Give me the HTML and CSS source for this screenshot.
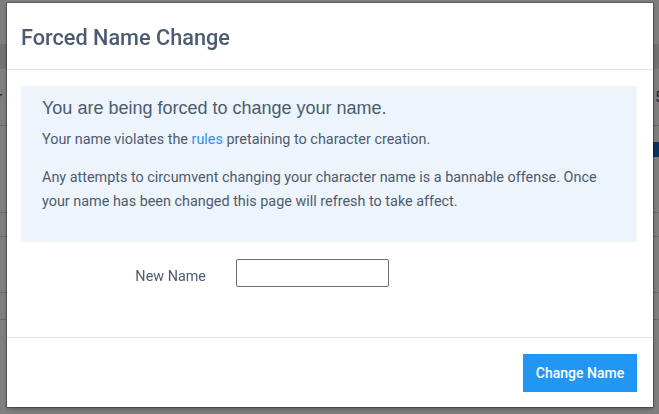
FILE: index.html
```html
<!DOCTYPE html>
<html>
<head>
<meta charset="utf-8">
<link rel="stylesheet" href="styles.css">
</head>
<body>
<div class="page">
  <div class="page-top"></div>
  <div class="page-band"></div>
  <div class="page-row page-row-text"><span class="pl">ar</span><span class="pr">5</span></div>
  <div class="page-row page-row-blue"><span class="bluebar"></span></div>
  <div class="page-row page-row-a"></div>
  <div class="page-row page-row-b"></div>
  <div class="page-row page-row-c"></div>
  <div class="page-row page-row-d"></div>
</div>
<div class="backdrop">
  <div class="modal">
    <div class="modal-header">
      <h3 class="modal-title">Forced Name Change</h3>
    </div>
    <div class="modal-body">
      <div class="notice">
        <h4 class="notice-title">You are being forced to change your name.</h4>
        <p class="notice-text">Your name violates the <a class="link" href="#">rules</a> pretaining to character creation.</p>
        <p class="notice-text notice-text-2">Any attempts to circumvent changing your character name is a bannable offense. Once your name has been changed this page will refresh to take affect.</p>
      </div>
      <div class="form-row">
        <label class="form-label">New Name</label>
        <input class="form-input" type="text">
      </div>
    </div>
    <div class="modal-footer">
      <button class="btn-primary">Change Name</button>
    </div>
  </div>
</div>
</body>
</html>
```
FILE: styles.css
```css
html, body {
  margin: 0;
  padding: 0;
}
body {
  width: 659px;
  height: 414px;
  overflow: hidden;
  background: #ffffff;
  font-family: Roboto, "Liberation Sans", sans-serif;
}
.page {
  display: flex;
  flex-direction: column;
}
.page-top {
  height: 44px;
  background: #fdfdfd;
}
.page-band {
  height: 25px;
  background: #e4e4e4;
}
.page-row {
  border-bottom: 1px solid #d4d4d4;
  position: relative;
}
.page-row-text {
  height: 56px;
  display: flex;
  justify-content: space-between;
  align-items: center;
  font-size: 14px;
  color: #333;
}
.pl { margin-left: -10px; }
.pr { margin-right: -4px; }
.page-row-blue {
  height: 86px;
  border-bottom: 1px solid #d4d4d4;
}
.bluebar {
  position: absolute;
  right: 0;
  top: 16px;
  width: 10px;
  height: 15px;
  background: #1565c0;
}
.page-row-a { height: 23px; }
.page-row-b { height: 55px; }
.page-row-c { height: 26px; }
.page-row-d { height: 60px; border-bottom: none; }

.backdrop {
  position: fixed;
  left: 0;
  top: 0;
  width: 659px;
  height: 414px;
  background: rgba(0, 0, 0, 0.5);
}
.modal {
  position: absolute;
  left: 7px;
  top: 3px;
  width: 646px;
  height: 404px;
  background: #ffffff;
  box-shadow: 0 0 0 1px rgba(0, 0, 0, 0.25), 0 2px 4px rgba(0, 0, 0, 0.3);
  display: flex;
  flex-direction: column;
  color: #4a5568;
}
.modal-header {
  height: 66px;
  border-bottom: 1px solid #e2e2e2;
  display: flex;
  align-items: center;
  padding: 0 14px;
}
.modal-title {
  margin: 0;
  font-family: Roboto, sans-serif;
  font-weight: 500;
  font-size: 21.7px;
  color: #4d5b70;
  position: relative;
  top: 1px;
}
.modal-body {
  flex: 1;
  padding: 16px 16px 0 14px;
}
.notice {
  background: #edf4fb;
  height: 156px;
  box-sizing: border-box;
  padding: 11px 21px 0;
}
.notice-title {
  margin: 0;
  font-family: "Liberation Sans", Arial, sans-serif;
  font-weight: 400;
  font-size: 18px;
  line-height: 22px;
  color: #4d5b70;
}
.notice-text {
  margin: 9px 0 0;
  font-size: 14.4px;
  line-height: 24px;
  color: #4d5b70;
}
.notice-text-2 {
  margin-top: 14px;
}
.link {
  color: #2f8fe6;
  text-decoration: none;
}
.form-row {
  display: flex;
  align-items: center;
  margin-top: 17px;
}
.form-label {
  width: 215px;
  text-align: right;
  padding-right: 30px;
  box-sizing: border-box;
  font-size: 14.4px;
  color: #4d5b70;
  position: relative;
  top: 3px;
}
.form-input {
  width: 153px;
  height: 28px;
  box-sizing: border-box;
  border: 1px solid #6e6e6e;
  border-radius: 2px;
  margin: 0;
  padding: 0 6px;
  background: #fff;
}
.modal-footer {
  height: 70px;
  border-top: 1px solid #e2e2e2;
  display: flex;
  justify-content: flex-end;
  align-items: flex-start;
  padding: 16px 16px 0 0;
  box-sizing: border-box;
}
.btn-primary {
  width: 114px;
  height: 38px;
  border: none;
  border-radius: 0;
  background: #2196f3;
  color: #ffffff;
  font-family: Roboto, sans-serif;
  font-weight: 500;
  font-size: 14px;
  padding: 0;
}
```
